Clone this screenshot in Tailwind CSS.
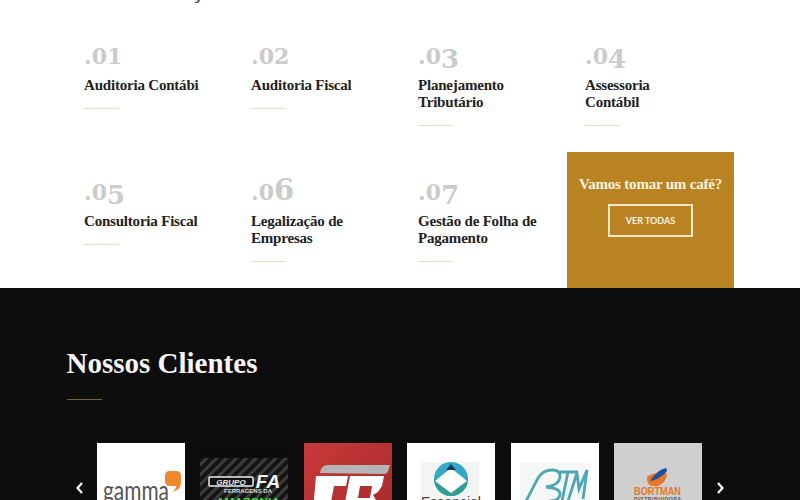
<!DOCTYPE html>
<html lang="pt">
<head>
<meta charset="utf-8">
<script src="https://cdn.jsdelivr.net/npm/@tailwindcss/browser@4"></script>
</head>
<body class="bg-white font-['Liberation_Serif',serif]">
<div class="w-[800px] h-[500px] overflow-hidden flex flex-col">
  <section class="h-[288px] shrink-0 px-[66px] bg-white">
    <h2 class="-mt-[21px] mb-[1px] h-[23px] text-[23px] leading-[23px] font-bold text-[#555] tracking-[0.2px]">Nossos Serviços Contábeis</h2>
    <div class="grid grid-cols-[repeat(4,167px)] grid-rows-[149px_136px]">
      <div class="pl-[18px] pt-[36px]">
        <div class="h-[38px] font-['DejaVu_Serif',serif] font-bold text-[22px] leading-[34px] text-[#cbcbcb]">.01</div>
        <h3 class="text-[15px] tracking-[-0.2px] leading-[17px] font-bold text-[#222] w-[135px]">Auditoria Contábi</h3>
        <div class="mt-[13.5px] w-[35px] h-px bg-[#e4ddc8]"></div>
      </div>
      <div class="pl-[18px] pt-[36px]">
        <div class="h-[38px] font-['DejaVu_Serif',serif] font-bold text-[22px] leading-[34px] text-[#cbcbcb]">.02</div>
        <h3 class="text-[15px] tracking-[-0.2px] leading-[17px] font-bold text-[#222] w-[135px]">Auditoria Fiscal</h3>
        <div class="mt-[13.5px] w-[35px] h-px bg-[#e4ddc8]"></div>
      </div>
      <div class="pl-[18px] pt-[36px]">
        <div class="h-[38px] font-['DejaVu_Serif',serif] font-bold text-[22px] leading-[34px] text-[#cbcbcb]">.0<span class="text-[26px] leading-none align-[-4px]">3</span></div>
        <h3 class="text-[15px] tracking-[-0.2px] leading-[17px] font-bold text-[#222] w-[125px]">Planejamento Tributário</h3>
        <div class="mt-[13.5px] w-[35px] h-px bg-[#e4ddc8]"></div>
      </div>
      <div class="pl-[18px] pt-[36px]">
        <div class="h-[38px] font-['DejaVu_Serif',serif] font-bold text-[22px] leading-[34px] text-[#cbcbcb]">.0<span class="text-[26px] leading-none align-[-4px]">4</span></div>
        <h3 class="text-[15px] tracking-[-0.2px] leading-[17px] font-bold text-[#222] w-[100px]">Assessoria Contábil</h3>
        <div class="mt-[13.5px] w-[35px] h-px bg-[#e4ddc8]"></div>
      </div>
      <div class="pl-[18px] pt-[23px]">
        <div class="h-[38px] font-['DejaVu_Serif',serif] font-bold text-[22px] leading-[34px] text-[#cbcbcb]">.0<span class="text-[26px] leading-none align-[-4px]">5</span></div>
        <h3 class="text-[15px] tracking-[-0.2px] leading-[17px] font-bold text-[#222] w-[135px]">Consultoria Fiscal</h3>
        <div class="mt-[13.5px] w-[35px] h-px bg-[#e4ddc8]"></div>
      </div>
      <div class="pl-[18px] pt-[23px]">
        <div class="h-[38px] font-['DejaVu_Serif',serif] font-bold text-[22px] leading-[34px] text-[#cbcbcb]">.0<span class="text-[29px] leading-none">6</span></div>
        <h3 class="text-[15px] tracking-[-0.2px] leading-[17px] font-bold text-[#222] w-[125px]">Legalização de Empresas</h3>
        <div class="mt-[13.5px] w-[35px] h-px bg-[#e4ddc8]"></div>
      </div>
      <div class="pl-[18px] pt-[23px]">
        <div class="h-[38px] font-['DejaVu_Serif',serif] font-bold text-[22px] leading-[34px] text-[#cbcbcb]">.0<span class="text-[26px] leading-none align-[-4px]">7</span></div>
        <h3 class="text-[15px] tracking-[-0.2px] leading-[17px] font-bold text-[#222] w-[135px]">Gestão de Folha de Pagamento</h3>
        <div class="mt-[13.5px] w-[35px] h-px bg-[#e4ddc8]"></div>
      </div>
      <div class="bg-[#b98324] flex flex-col items-center pt-[23px]">
        <div class="text-[15px] tracking-[-0.2px] leading-[18px] font-bold text-[#fbf3df]">Vamos tomar um café?</div>
        <a class="mt-[11px] w-[85px] h-[33px] border-2 border-[#f5e8c8] flex items-center justify-center font-['Lato',sans-serif] text-[9px] font-bold text-[#fbf3df]">VER TODAS</a>
      </div>
    </div>
  </section>
  <section class="flex-1 bg-[#0d0d0d] pl-[66.5px] pt-[60px]">
    <h2 class="text-[29px] leading-[31px] font-bold text-[#f5f5f5]">Nossos Clientes</h2>
    <div class="mt-[19.5px] w-[35px] h-px bg-[#6e6248]"></div>
    <div class="mt-[43px] -ml-[66.5px] pl-[76px] flex items-start">
      <svg class="mt-[39px] w-2 h-3 mr-[13px]" viewBox="0 0 8 12" fill="none" stroke="#fff" stroke-width="2.2"><path d="M6 1 1.5 6 6 11"/></svg>
      <div class="flex gap-[15.4px]">
        <div class="w-[88px] h-[80px] bg-white overflow-hidden">
          <svg class="w-full h-full" viewBox="0 0 88 80">
            <path d="M68 33q0-5 5-5h6q5 0 5 5v6q0 6-4 8l-5 2q4-3 4-6h-6q-5 0-5-5z" fill="#ee8a2e"/>
            <text x="6" y="57" font-family="Lato,sans-serif" font-size="27" fill="#555" textLength="66" lengthAdjust="spacingAndGlyphs">gamma</text>
          </svg>
        </div>
        <div class="w-[88px] h-[80px] bg-[#0c0c0c] overflow-hidden">
          <svg class="w-full h-full" viewBox="0 0 88 80">
            <defs><pattern id="c" width="7" height="7" patternUnits="userSpaceOnUse" patternTransform="rotate(45)"><rect width="7" height="7" fill="#141414"/><rect width="3" height="7" fill="#3c3c3c"/></pattern></defs>
            <rect y="15" width="88" height="65" fill="url(#c)"/>
            <rect x="9" y="34" width="44" height="9" rx="1" fill="#111" stroke="#eee" stroke-width="1.5"/>
            <text x="31" y="41.5" text-anchor="middle" font-family="Liberation Sans,sans-serif" font-size="8" font-style="italic" font-weight="bold" fill="#eee">GRUPO</text>
            <text x="68" y="45" text-anchor="middle" font-family="Liberation Sans,sans-serif" font-size="19" font-style="italic" font-weight="bold" fill="#f5f5f5">FA</text>
            <text x="48" y="50" text-anchor="middle" font-family="Liberation Sans,sans-serif" font-size="6" font-weight="bold" fill="#ddd">FERRAGENS DA</text>
            <text x="48" y="63" text-anchor="middle" font-family="Liberation Sans,sans-serif" font-size="11" font-weight="bold" fill="#3fdc3f" textLength="64" lengthAdjust="spacingAndGlyphs">AMAZONIA</text>
          </svg>
        </div>
        <div class="w-[88px] h-[80px] overflow-hidden bg-gradient-to-br from-[#c9393a] to-[#a52a2c]">
          <svg class="w-full h-full" viewBox="0 0 88 80">
            <path d="M16 30q1-8 8-8h62l-2 6q-1 3-4 3z" fill="#b5b5b5"/>
            <path d="M12 33h32l-2 10H30l-7 37H8z" fill="#fff"/>
            <path d="M46 33h34l-2 10-4 6-5 3 3 5-4 23H37zm10 10-2 12h12l2-12z" fill="#fff" fill-rule="evenodd"/>
          </svg>
        </div>
        <div class="w-[88px] h-[80px] bg-white overflow-hidden">
          <svg class="w-full h-full" viewBox="0 0 88 80">
            <rect x="14" y="19" width="58" height="42" fill="#f3f5f5"/>
            <circle cx="44" cy="36" r="17" fill="#35a9c4"/>
            <path d="M27 36a17 17 0 0 0 34 0z" fill="#2f9e92"/>
            <path d="M44 25 60 38 44 50 28 38z" fill="#fff"/>
            <path d="M44 21 49 27H39z" fill="#123a66"/>
            <text x="44" y="64" text-anchor="middle" font-family="Liberation Sans,sans-serif" font-size="14" fill="#444">Essencial</text>
          </svg>
        </div>
        <div class="w-[88px] h-[80px] bg-white overflow-hidden">
          <svg class="w-full h-full" viewBox="0 0 88 80">
            <rect x="9" y="20" width="70" height="60" fill="#f6f7f7"/>
            <g fill="none" stroke="#4fa7b3" stroke-width="2.8">
              <path d="M14 60 27 35Q32 27 41 27q8 0 8 6 0 9-14 11 14 1 14 7 0 7-11 7"/>
              <path d="M49 29H67M57 29 51 58"/>
              <path d="M57 58 66 30l2 16 8-19-4 29"/>
            </g>
          </svg>
        </div>
        <div class="w-[88px] h-[80px] bg-[#cfcfcf] overflow-hidden">
          <svg class="w-full h-full" viewBox="0 0 88 80">
            <path d="M33 34q8-6 20-3-1 9-9 12-12 2-11-9z" fill="#e5772a"/>
            <path d="M36 38Q43 27 52 25q3 3-3 7-6 5-13 6z" fill="#1f4f9c"/>
            <text x="20" y="52" font-family="Liberation Sans,sans-serif" font-size="10" font-weight="bold" fill="#e5772a" textLength="47" lengthAdjust="spacingAndGlyphs">BORTMAN</text>
            <text x="20" y="58" font-family="Liberation Sans,sans-serif" font-size="5" font-weight="bold" fill="#555" textLength="47">DISTRIBUIDORA</text>
          </svg>
        </div>
      </div>
      <svg class="mt-[39px] w-2 h-3 ml-[14px]" viewBox="0 0 8 12" fill="none" stroke="#fff" stroke-width="2.2"><path d="M2 1 6.5 6 2 11"/></svg>
    </div>
  </section>
</div>
</body>
</html>
